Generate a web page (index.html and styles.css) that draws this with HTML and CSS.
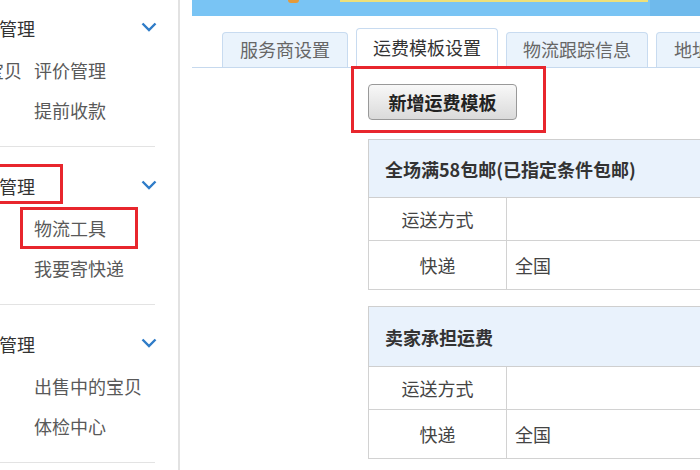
FILE: index.html
```html
<!DOCTYPE html>
<html lang="zh-CN">
  <head>
    <meta charset="UTF-8" />
    <title>物流工具 - 运费模板设置</title>
    <link rel="stylesheet" href="styles.css">
  </head>
  <body>
    <aside class="sidebar">
      <div class="sidebar-inner">
        <div class="nav-section">
          <div class="nav-head">
            <span>交易管理</span>
            <svg class="chevron" width="16" height="10" viewBox="0 0 16 10"><polyline points="1.5,1.5 8,8 14.5,1.5" /></svg>
          </div>
          <div class="nav-items">
            <a>已卖出的宝贝</a>
            <a>评价管理</a>
            <a>分期</a>
            <a>提前收款</a>
          </div>
        </div>

        <div class="nav-section">
          <div class="nav-head">
            <span class="mark mark-head">物流管理</span>
            <svg class="chevron" width="16" height="10" viewBox="0 0 16 10"><polyline points="1.5,1.5 8,8 14.5,1.5" /></svg>
          </div>
          <div class="nav-items">
            <a>发货</a>
            <a class="mark mark-item">物流工具</a>
            <a>服务</a>
            <a>我要寄快递</a>
          </div>
        </div>

        <div class="nav-section">
          <div class="nav-head">
            <span>宝贝管理</span>
            <svg class="chevron" width="16" height="10" viewBox="0 0 16 10"><polyline points="1.5,1.5 8,8 14.5,1.5" /></svg>
          </div>
          <div class="nav-items">
            <a>发布</a>
            <a>出售中的宝贝</a>
            <a>仓库</a>
            <a>体检中心</a>
          </div>
        </div>
      </div>
    </aside>

    <main class="main">
      <div class="banner">
        <span class="banner-dot"></span>
        <span class="banner-bar"></span>
        <span class="banner-end"></span>
      </div>

      <nav class="tabs">
        <a class="tab">服务商设置</a>
        <a class="tab active">运费模板设置</a>
        <a class="tab">物流跟踪信息</a>
        <a class="tab">地址库</a>
      </nav>

      <section class="panel">
        <div class="mark mark-btn">
          <button type="button" class="btn">新增运费模板</button>
        </div>

        <table class="tpl">
          <tr>
            <th colspan="3">全场满58包邮(已指定条件包邮)</th>
          </tr>
          <tr class="row-head">
            <td class="col-way">运送方式</td>
            <td class="col-area">运送到</td>
            <td></td>
          </tr>
          <tr class="row-body">
            <td class="col-way">快递</td>
            <td class="col-area left">全国</td>
            <td></td>
          </tr>
        </table>

        <table class="tpl">
          <tr>
            <th colspan="3" class="tall">卖家承担运费</th>
          </tr>
          <tr class="row-head">
            <td class="col-way">运送方式</td>
            <td class="col-area">运送到</td>
            <td></td>
          </tr>
          <tr class="row-body">
            <td class="col-way">快递</td>
            <td class="col-area left">全国</td>
            <td></td>
          </tr>
        </table>
      </section>
    </main>
  </body>
</html>
```

FILE: styles.css
```css
* {
  margin: 0;
  padding: 0;
  box-sizing: border-box;
}
body {
  font-family: "Noto Sans CJK SC", "Noto Sans", sans-serif;
  background: #fff;
  display: flex;
  width: 700px;
  height: 470px;
  overflow: hidden;
  color: #333;
}

/* sidebar */
.sidebar {
  width: 180px;
  flex-shrink: 0;
  border-right: 2px solid #e2e2e2;
  overflow: hidden;
}
.sidebar-inner {
  margin-left: -86px;
  margin-top: -10px;
}
.nav-section {
  width: 241px;
  padding: 18px 0 16px;
  border-bottom: 1px solid #e3e3e3;
}
.nav-section + .nav-section {
  padding-top: 19px;
}
.nav-head {
  display: flex;
  justify-content: space-between;
  align-items: center;
  height: 40px;
  padding-left: 49px;
  font-size: 18px;
  line-height: 40px;
  color: #333;
}
.chevron {
  margin-right: -2px;
  margin-top: -3px;
}
.chevron polyline {
  fill: none;
  stroke: #2f7cc8;
  stroke-width: 2.4;
}
.nav-items {
  display: grid;
  grid-template-columns: 120px auto;
  margin-top: 2px;
}
.nav-items a {
  justify-self: start;
  height: 40px;
  line-height: 40px;
  font-size: 18px;
  color: #595959;
}

/* red annotation boxes */
.mark {
  position: relative;
}
.mark::after {
  content: "";
  position: absolute;
  border: 3px solid #e8262d;
}
.mark-head::after {
  top: -2px;
  bottom: 2px;
  left: -10px;
  right: -28px;
}
.mark-item::after {
  top: -1px;
  bottom: -1px;
  left: -14px;
  right: -32px;
}
.mark-btn {
  display: inline-block;
  margin-top: 16px;
}
.mark-btn::after {
  top: -18px;
  bottom: -13px;
  left: -17px;
  right: -29px;
}

/* main */
.main {
  flex: 1;
  padding-left: 12px;
  overflow: hidden;
}
.banner {
  height: 16px;
  background: #79c4f4;
  display: flex;
  align-items: flex-start;
}
.banner-dot {
  width: 11px;
  height: 3px;
  margin-left: 96px;
  border-radius: 0 0 6px 6px;
  background: #e59a3a;
}
.banner-bar {
  width: 308px;
  height: 2px;
  margin-left: 41px;
  background: #eee07a;
}
.banner-end {
  flex: 1;
  height: 16px;
  margin-left: 2px;
  background: #6fbaec;
}

.tabs {
  display: flex;
  align-items: flex-end;
  gap: 8px;
  margin-top: 12px;
  padding-left: 30px;
  border-bottom: 1px solid #c6d9ee;
  white-space: nowrap;
}
.tab {
  flex-shrink: 0;
  height: 35px;
  line-height: 33px;
  padding: 0 17px;
  font-size: 18px;
  color: #666;
  background: #eaf3fc;
  border: 1px solid #c8dbf0;
  border-bottom: none;
  border-radius: 4px 4px 0 0;
}
.tab.active {
  height: 40px;
  line-height: 36px;
  margin-bottom: -1px;
  padding: 0 16px;
  color: #333;
  background: #fff;
}
.tab:nth-child(3) {
  padding: 0 16px;
}

.panel {
  padding-left: 176px;
}
.btn {
  display: block;
  width: 149px;
  height: 36px;
  font-family: inherit;
  font-size: 18px;
  font-weight: 700;
  color: #222;
  background: linear-gradient(#f8f8f8, #dadada);
  border: 1px solid #999;
  border-radius: 4px;
}

.tpl {
  width: 900px;
  margin-top: 19px;
  border-collapse: collapse;
  border: 1px solid #cfcfcf;
  font-size: 18px;
}
.tpl + .tpl {
  margin-top: 16px;
}
.tpl th {
  height: 58px;
  padding-left: 16px;
  text-align: left;
  font-weight: 700;
  color: #333;
  background: #e9f2fc;
  border-bottom: 1px solid #cfcfcf;
}
.tpl th.tall {
  height: 60px;
}
.tpl td {
  border: 1px solid #d2d2d2;
  color: #444;
  text-align: center;
}
.row-head td {
  height: 43px;
}
.row-body td {
  height: 49px;
}
.col-way {
  width: 138px;
}
.col-area {
  width: 446px;
}
.col-area.left {
  text-align: left;
  padding-left: 8px;
}
```
